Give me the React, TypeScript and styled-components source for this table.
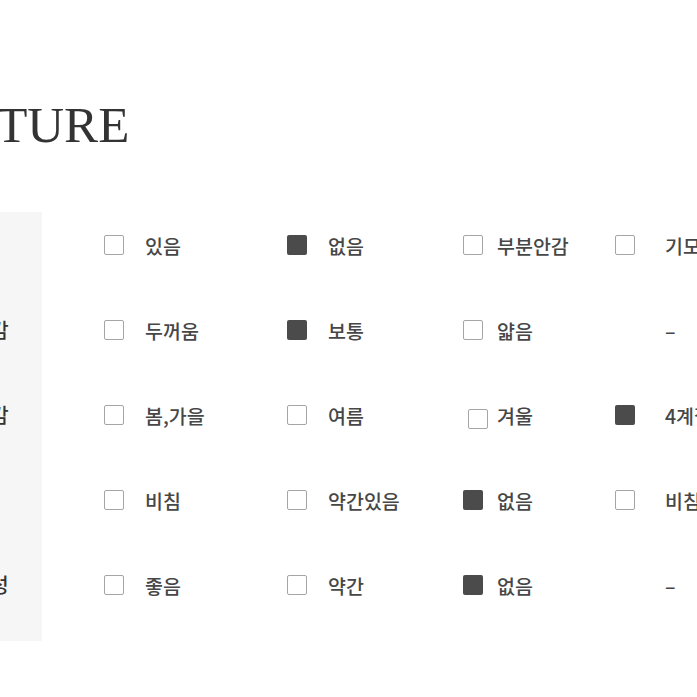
import React from "react";
import styled, { createGlobalStyle } from "styled-components";

const GlobalStyle = createGlobalStyle`
  html, body {
    margin: 0;
    padding: 0;
    background: #fff;
    overflow: hidden;
  }
`;

const Page = styled.div`
  width: 697px;
  height: 697px;
  overflow: hidden;
  background: #fff;
  padding-top: 100px;
  box-sizing: border-box;
`;

const Title = styled.h1`
  margin: 0 0 0 -103px;
  font-family: "Liberation Serif", "Times New Roman", serif;
  font-weight: normal;
  font-size: 51px;
  line-height: 50px;
  color: #333;
  white-space: nowrap;
`;

const Table = styled.div`
  display: flex;
  margin-top: 62px;
`;

const LabelColumn = styled.div`
  flex: 0 0 122px;
  margin-left: -80px;
  padding-bottom: 4px;
  background: #f6f6f6;
  display: grid;
  grid-auto-rows: 85px;
`;

const Label = styled.div`
  display: flex;
  align-items: center;
  justify-content: center;
  padding-bottom: 20px;
  font-family: "Noto Sans CJK KR", "Noto Sans", sans-serif;
  font-size: 20px;
  font-weight: 500;
  color: #333;
`;

const Options = styled.div`
  flex: 1;
  display: grid;
  grid-template-columns: 62px 41px 142px 41px 135px 34px 118px 50px 1fr;
  grid-auto-rows: 85px;
  min-width: 0;
`;

const Spacer = styled.div``;

const BoxCell = styled.div`
  display: flex;
  align-items: center;
  padding-bottom: 20px;
`;

const Box = styled.span<{ $checked?: boolean; $nudge?: boolean }>`
  width: 20px;
  height: 20px;
  box-sizing: border-box;
  border-radius: 2px;
  background: ${(p) => (p.$checked ? "#4b4b4b" : "#fff")};
  border: ${(p) => (p.$checked ? "none" : "1.5px solid #a5a5a5")};
  margin: ${(p) => (p.$nudge ? "9px 0 0 5px" : "0")};
`;

const Text = styled.div`
  display: flex;
  align-items: center;
  padding-bottom: 18px;
  font-family: "Noto Sans CJK KR", "Noto Sans", sans-serif;
  font-size: 19.5px;
  font-weight: 500;
  color: #474747;
  white-space: nowrap;
`;

type Opt = { text: string; checked?: boolean; box?: boolean; nudge?: boolean };

const rows: { label: string; options: Opt[] }[] = [
  {
    label: "안감",
    options: [
      { text: "있음", box: true },
      { text: "없음", box: true, checked: true },
      { text: "부분안감", box: true },
      { text: "기모", box: true },
    ],
  },
  {
    label: "두께감",
    options: [
      { text: "두꺼움", box: true },
      { text: "보통", box: true, checked: true },
      { text: "얇음", box: true },
      { text: "–" },
    ],
  },
  {
    label: "계절감",
    options: [
      { text: "봄,가을", box: true },
      { text: "여름", box: true },
      { text: "겨울", box: true, nudge: true },
      { text: "4계절", box: true, checked: true },
    ],
  },
  {
    label: "비침",
    options: [
      { text: "비침", box: true },
      { text: "약간있음", box: true },
      { text: "없음", box: true, checked: true },
      { text: "비침", box: true },
    ],
  },
  {
    label: "신축성",
    options: [
      { text: "좋음", box: true },
      { text: "약간", box: true },
      { text: "없음", box: true, checked: true },
      { text: "–" },
    ],
  },
];

const App: React.FC = () => {
  return (
    <Page>
      <GlobalStyle />
      <Title>TEXTURE</Title>
      <Table>
        <LabelColumn>
          {rows.map((r) => (
            <Label key={r.label}>{r.label}</Label>
          ))}
        </LabelColumn>
        <Options>
          {rows.map((r, i) => (
            <React.Fragment key={i}>
              <Spacer />
              {r.options.map((o, j) => (
                <React.Fragment key={j}>
                  <BoxCell>
                    {o.box && <Box $checked={o.checked} $nudge={o.nudge} />}
                  </BoxCell>
                  <Text>{o.text}</Text>
                </React.Fragment>
              ))}
            </React.Fragment>
          ))}
        </Options>
      </Table>
    </Page>
  );
};

export default App;
